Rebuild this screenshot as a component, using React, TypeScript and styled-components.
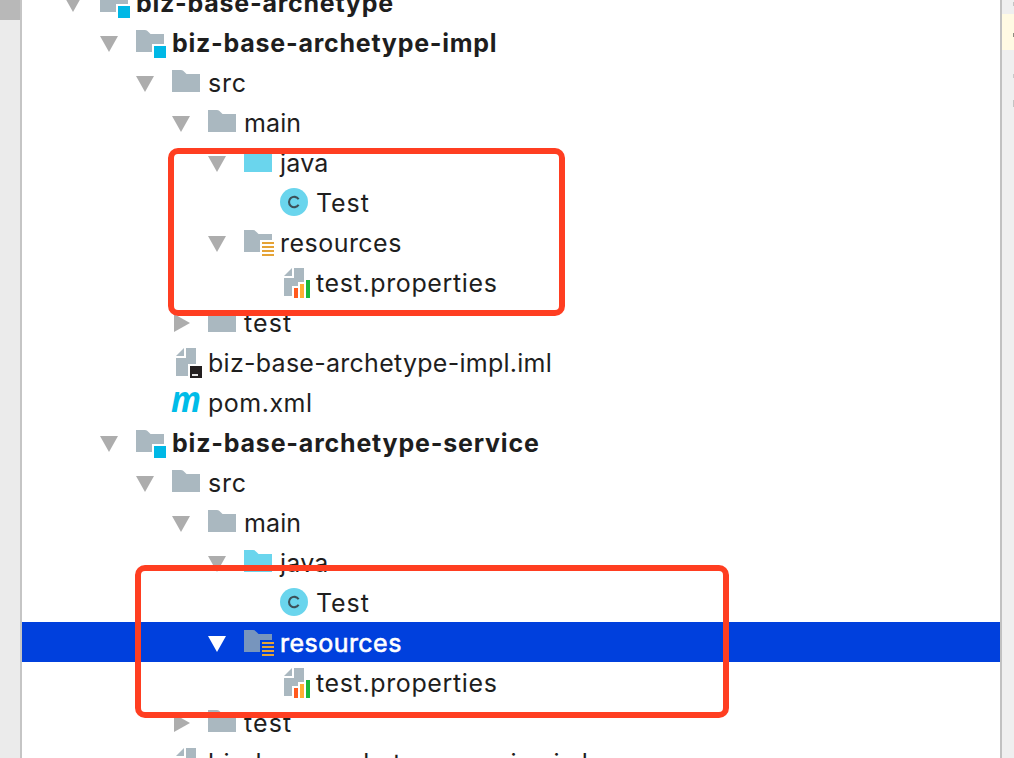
import React from 'react';
import styled, {createGlobalStyle, css} from 'styled-components';

type IconName = 'folder' | 'module' | 'source' | 'resources' | 'class' | 'properties' | 'iml' | 'maven';

type NodeType = {
    title: string
    level: number
    icon: IconName
    spacing: number
    state?: 'open' | 'closed'
    bold?: boolean
    selected?: boolean
}

const nodes: NodeType[] = [
    {title: 'biz-base-archetype', level: 0, icon: 'module', spacing: 0.75, state: 'open', bold: true},
    {title: 'biz-base-archetype-impl', level: 1, icon: 'module', spacing: 0.75, state: 'open', bold: true},
    {title: 'src', level: 2, icon: 'folder', spacing: 0.8, state: 'open'},
    {title: 'main', level: 3, icon: 'folder', spacing: 0.1, state: 'open'},
    {title: 'java', level: 4, icon: 'source', spacing: 0.2, state: 'open'},
    {title: 'Test', level: 5, icon: 'class', spacing: 0.9},
    {title: 'resources', level: 4, icon: 'resources', spacing: 0.47, state: 'open'},
    {title: 'test.properties', level: 5, icon: 'properties', spacing: 0.63},
    {title: 'test', level: 3, icon: 'folder', spacing: 1.1, state: 'closed'},
    {title: 'biz-base-archetype-impl.iml', level: 2, icon: 'iml', spacing: 0.27},
    {title: 'pom.xml', level: 2, icon: 'maven', spacing: 0.5},
    {title: 'biz-base-archetype-service', level: 1, icon: 'module', spacing: 0.8, state: 'open', bold: true},
    {title: 'src', level: 2, icon: 'folder', spacing: 0.8, state: 'open'},
    {title: 'main', level: 3, icon: 'folder', spacing: 0.1, state: 'open'},
    {title: 'java', level: 4, icon: 'source', spacing: 0.2, state: 'open'},
    {title: 'Test', level: 5, icon: 'class', spacing: 0.9},
    {title: 'resources', level: 4, icon: 'resources', spacing: 0.47, state: 'open', selected: true},
    {title: 'test.properties', level: 5, icon: 'properties', spacing: 0.63},
    {title: 'test', level: 3, icon: 'folder', spacing: 1.1, state: 'closed'},
    {title: 'biz-base-archetype-service.iml', level: 2, icon: 'iml', spacing: 0.2},
];

const folderPath = 'M0 8H9Q11 8 12.5 10L14.5 12H28V30H0Z';
const badgedFolderPath = 'M0 8H9Q11 8 12.5 10L14.5 12H28V22H16V30H0Z';
const resourcesFolderPath = 'M0 8H9Q11 8 12.5 10L14.5 12H28V18H16V30H0Z';

const NodeIcon = ({name, selected}: { name: IconName, selected?: boolean }) => {
    const gray = selected ? '#7795bd' : '#aab8c0';
    return (
        <Icon viewBox="0 0 36 40">
            {name === 'folder' && <path d={folderPath} fill={gray}/>}
            {name === 'source' && <path d={folderPath} fill="#6ad5ed"/>}
            {name === 'module' && <>
                <path d={badgedFolderPath} fill={gray}/>
                <rect x="18" y="24" width="12" height="12" fill="#00b8e6"/>
            </>}
            {name === 'resources' && <>
                <path d={resourcesFolderPath} fill={gray}/>
                <path d="M18 21H30M18 25H30M18 29H30M18 33H30" stroke="#e5a336" strokeWidth="2"/>
            </>}
            {name === 'class' && <>
                <circle cx="14" cy="20" r="14" fill="#6ad5ed"/>
                <path d="M18.6 17.2A5.2 5.2 0 1 0 18.6 22.8" fill="none" stroke="#3c5059" strokeWidth="2.1"/>
            </>}
            {name === 'properties' && <>
                <path d="M12 6V14H4Z" fill={gray}/>
                <path d="M14 6H24V16H24V20H18V24H12V34H4V16H14Z" fill={gray}/>
                <rect x="14" y="26" width="4" height="10" fill="#ff5a1f"/>
                <rect x="20" y="22" width="4" height="14" fill="#ffae33"/>
                <rect x="26" y="18" width="4" height="18" fill="#18b83a"/>
            </>}
            {name === 'iml' && <>
                <path d="M12 6V14H4Z" fill={gray}/>
                <path d="M14 6H24V22H16V34H4V16H14Z" fill={gray}/>
                <rect x="18" y="24" width="12" height="12" fill="#231f20"/>
                <rect x="20" y="32" width="6" height="2" fill="#e4e4e4"/>
            </>}
            {name === 'maven' &&
                <MavenText x="-1" y="30" textLength="30" lengthAdjust="spacingAndGlyphs">m</MavenText>}
        </Icon>
    );
};

function App() {
    return (
        <>
            <GlobalStyle/>
            <Window>
                <SideStrip>
                    <SideTab/>
                </SideStrip>
                <Tree>
                    {nodes.map((n, i) => (
                        <Row key={i} $level={n.level} $selected={n.selected}>
                            <Toggle>
                                {n.state && (
                                    <Arrow viewBox="0 0 36 40" $selected={n.selected}>
                                        <path d={n.state === 'open' ? 'M0 14H18L9 30Z' : 'M2 12L18 21L2 30Z'}/>
                                    </Arrow>
                                )}
                            </Toggle>
                            <NodeIcon name={n.icon} selected={n.selected}/>
                            <Label $bold={n.bold} $selected={n.selected} $spacing={n.spacing}>{n.title}</Label>
                        </Row>
                    ))}
                </Tree>
                <Editor>
                    <Line $height={14}><Mark $top={2} $height={4} $color="#c4c4c4"/></Line>
                    <Line $height={36} $current><Mark $top={19} $height={4} $color="#8f8d80"/></Line>
                    <Line $height={40}><Mark $top={24} $height={4} $color="#c9c9c9"/></Line>
                    <Line $height={40}><Mark $top={10} $height={7} $color="#c4c4c4"/></Line>
                </Editor>
                <Highlight $left={168} $top={148} $width={397} $height={168}/>
                <Highlight $left={135} $top={565} $width={594} $height={153}/>
            </Window>
        </>
    );
}

export default App;

const GlobalStyle = createGlobalStyle`
  body {
    margin: 0;
    overflow: hidden;
    background-color: #fff;
  }
`

const Window = styled.div`
  position: relative;
  display: flex;
  width: 1014px;
  height: 758px;
  overflow: hidden;
  font-family: Inter, "Liberation Sans", sans-serif;
`

const SideStrip = styled.div`
  box-sizing: border-box;
  width: 22px;
  background-color: #ebebeb;
  border-right: 2px solid #c5c5c5;
`

const SideTab = styled.div`
  height: 20px;
  background-color: #b8b8b8;
`

const Tree = styled.div`
  width: 978px;
  margin-top: -18px;
`

const Row = styled.div<{ $level: number, $selected?: boolean }>`
  box-sizing: border-box;
  display: flex;
  height: 40px;
  padding-left: ${({$level}) => 42 + $level * 36}px;
  background-color: ${({$selected}) => $selected ? '#0040dd' : 'transparent'};
`

const Toggle = styled.div`
  width: 36px;
  flex-shrink: 0;
`

const Arrow = styled.svg<{ $selected?: boolean }>`
  display: block;
  width: 36px;
  height: 40px;
  fill: ${({$selected}) => $selected ? '#fff' : '#adadad'};
`

const Icon = styled.svg`
  width: 36px;
  height: 40px;
  flex-shrink: 0;
  overflow: visible;
`

const MavenText = styled.text`
  font-family: "Open Sans", sans-serif;
  font-size: 36px;
  font-style: italic;
  font-weight: 700;
  fill: #00bce8;
`

const Label = styled.span<{ $bold?: boolean, $selected?: boolean, $spacing: number }>`
  font-size: 25px;
  line-height: 42px;
  font-weight: ${({$bold}) => $bold ? 700 : 400};
  letter-spacing: ${({$spacing}) => $spacing}px;
  white-space: nowrap;
  color: #1e1e1e;
  ${({$selected}) => $selected && css`
    color: #fff;
    -webkit-text-stroke: 0.6px #fff;
  `}
`

const Editor = styled.div`
  box-sizing: border-box;
  width: 14px;
  background-color: #efefef;
  border-left: 2px solid #c1c1c1;
`

const Line = styled.div<{ $height: number, $current?: boolean }>`
  display: flex;
  justify-content: flex-end;
  height: ${({$height}) => $height}px;
  background-color: ${({$current}) => $current ? '#fffae3' : 'transparent'};
`

const Mark = styled.div<{ $top: number, $height: number, $color: string }>`
  width: 1px;
  height: ${({$height}) => $height}px;
  margin-top: ${({$top}) => $top}px;
  background-color: ${({$color}) => $color};
`

const Highlight = styled.div<{ $left: number, $top: number, $width: number, $height: number }>`
  position: absolute;
  box-sizing: border-box;
  left: ${({$left}) => $left}px;
  top: ${({$top}) => $top}px;
  width: ${({$width}) => $width}px;
  height: ${({$height}) => $height}px;
  border: 6px solid #ff3e21;
  border-radius: 10px;
`
